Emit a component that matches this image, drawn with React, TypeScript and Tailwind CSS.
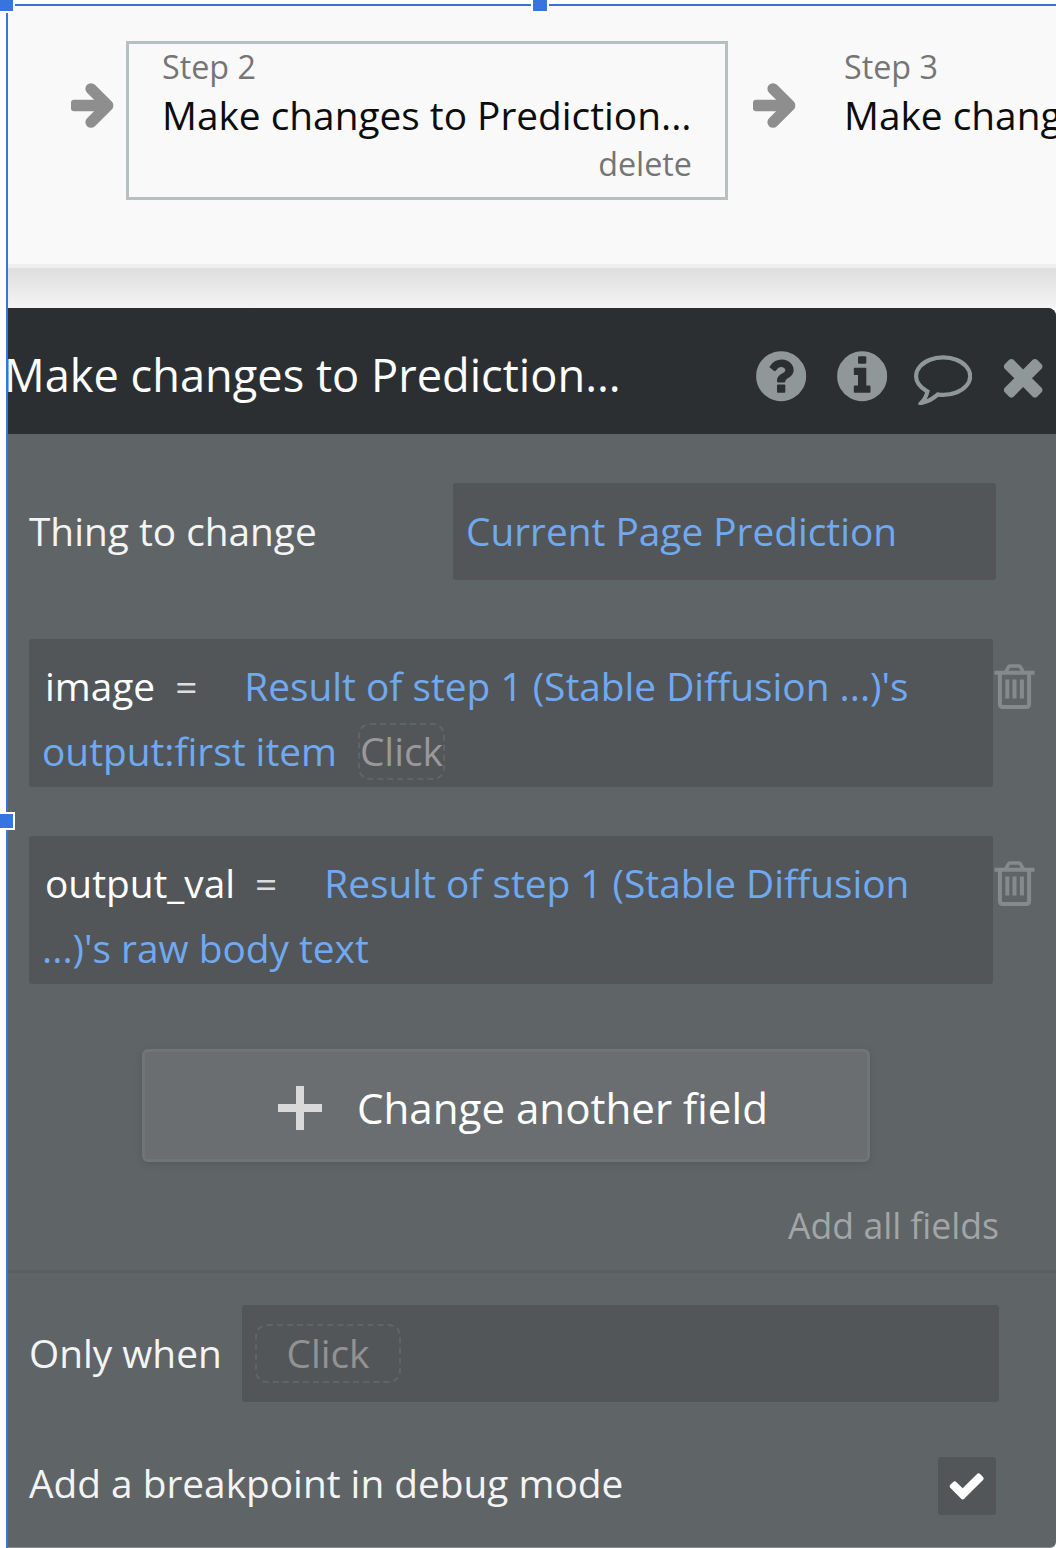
import type { ReactNode } from 'react';

const CIRCLE =
  'm384 0q0 209-103 385.5t-279.5 279.5-385.5 103-385.5-103-279.5-279.5-103-385.5 103-385.5 279.5-279.5 385.5-103 385.5 103 279.5 279.5 103 385.5z';

const glyphs = {
  question:
    'M1024 1376v-192q0-14-9-23t-23-9h-192q-14 0-23 9t-9 23v192q0 14 9 23t23 9h192q14 0 23-9t9-23zm256-672q0-88-55.5-163t-138.5-116-170-41q-243 0-371 213-15 24 8 42l132 100q7 6 19 6 16 0 25-12 53-68 86-92 34-24 86-24 48 0 85.5 26t37.5 59q0 38-20 61t-68 45q-63 28-115.5 86.5t-52.5 125.5v36q0 14 9 23t23 9h192q14 0 23-9t9-23q0-19 21.5-49.5t54.5-49.5q32-18 49-28.5t46-35 44.5-48 28-60.5 12.5-81zM1280 896' +
    CIRCLE,
  info:
    'M1152 1376v-160q0-14-9-23t-23-9h-96v-512q0-14-9-23t-23-9h-320q-14 0-23 9t-9 23v160q0 14 9 23t23 9h96v320h-96q-14 0-23 9t-9 23v160q0 14 9 23t23 9h448q14 0 23-9t9-23zm-128-896v-160q0-14-9-23t-23-9h-192q-14 0-23 9t-9 23v160q0 14 9 23t23 9h192q14 0 23-9t9-23zM1280 896' +
    CIRCLE,
  comment:
    'M896 384q-204 0-381.5 69.5t-282 187.5-104.5 255q0 112 71.5 213.5t201.5 175.5l87 50-27 96q-24 91-70 172 152-63 275-171l43-38 57 6q69 8 130 8 204 0 381.5-69.5t282-187.5 104.5-255-104.5-255-282-187.5-381.5-69.5zm896 512q0 174-120 321.5t-326 233-450 85.5q-70 0-145-8-198 175-460 242-49 14-114 22h-5q-15 0-27-10.5t-16-27.5v-1q-3-4-.5-12t2-10 4.5-9.5l6-9 7-8.5 8-9q7-8 31-34.5t34.5-38 31-39.5 32.5-51 27-59 26-76q-157-89-247.5-220t-90.5-281q0-174 120-321.5t326-233 450-85.5 450 85.5 326 233 120 321.5z',
  times:
    'M1490 1322q0 40-28 68l-136 136q-28 28-68 28t-68-28l-294-294-294 294q-28 28-68 28t-68-28l-136-136q-28-28-28-68t28-68l294-294-294-294q-28-28-28-68t28-68l136-136q28-28 68-28t68 28l294 294 294-294q28-28 68-28t68 28l136 136q28 28 28 68t-28 68l-294 294 294 294q28 28 28 68z',
  check:
    'M1671 566q0 40-28 68l-724 724-136 136q-28 28-68 28t-68-28l-136-136-362-362q-28-28-28-68t28-68l136-136q28-28 68-28t68 28l294 295 656-657q28-28 68-28t68 28l136 136q28 28 28 68z',
};

function Glyph({ name, className }: { name: keyof typeof glyphs; className: string }) {
  return (
    <svg viewBox="0 0 1792 1792" fill="currentColor" fillRule="evenodd" className={className}>
      <path d={glyphs[name]} />
    </svg>
  );
}

function Arrow() {
  return (
    <svg viewBox="0 0 44 46" className="mt-[77px] h-[46px] w-[44px] shrink-0 text-[#8e8e8e]">
      <rect x="1" y="16.800" width="36" height="11.400" rx="3" fill="currentColor" />
      <path
        d="M21 5.800 37.800 22.500 21 39.200"
        fill="none"
        stroke="currentColor"
        strokeWidth="11.200"
        strokeLinecap="round"
        strokeLinejoin="round"
      />
    </svg>
  );
}

function Trash() {
  return (
    <svg viewBox="0 0 42 46" fill="none" stroke="currentColor" className="mt-[25px] h-[46px] w-[42px] shrink-0 text-[#868a8c]">
      <path d="M1.500 8.800h40" strokeWidth="4" />
      <path d="M12.500 8.500l2.800-5.200q.6-1.300 2-1.300h8.400q1.400 0 2 1.300l2.800 5.200" strokeWidth="3.600" />
      <path d="M6.900 9v31q0 3 3 3h23.200q3 0 3-3V9" strokeWidth="4" />
      <path d="M14.300 15.500v19M21.500 15.500v19M28.900 15.500v19" strokeWidth="4" />
    </svg>
  );
}

function Step({ label, title, selected }: { label: string; title: string; selected?: boolean }) {
  return (
    <div
      className={
        selected
          ? 'mt-[35px] h-[159px] w-[602px] shrink-0 border-[3px] border-[#b6c0c1] px-[33px]'
          : 'mt-[35px] h-[159px] w-[602px] shrink-0 border-[3px] border-transparent px-[33px]'
      }
    >
      <div className="h-[44px] text-[32.3px] leading-[44px] text-[#757575]">{label}</div>
      <div className="h-[54px] text-[38.8px] leading-[55px] whitespace-nowrap text-[#0c0c0c]">{title}</div>
      {selected && <div className="h-[42px] text-right text-[32.3px] leading-[42px] text-[#757575]">delete</div>}
    </div>
  );
}

function FieldRow({ children }: { children: ReactNode }) {
  return (
    <div className="mb-[49px] flex pl-[21px]">
      <div className="h-[148px] w-[964px] shrink-0 rounded-[3px] bg-[#525659] pt-[15px] pl-[13px] text-[38.8px] leading-[65px] whitespace-nowrap text-[#70a9f0]">
        {children}
      </div>
      <Trash />
    </div>
  );
}

export default function App() {
  return (
    <div className="relative h-[1548px] w-[1056px] overflow-hidden bg-white pt-1.5 pl-2 font-['Open_Sans','Noto_Sans',sans-serif]">
      <div className="flex h-[258px] bg-[#f9f9f9] pl-[62px]">
        <Arrow />
        <div className="ml-[12px] shrink-0">
          <Step label="Step 2" title="Make changes to Prediction..." selected />
        </div>
        <div className="ml-[24px] shrink-0">
          <Arrow />
        </div>
        <div className="ml-[12px] shrink-0">
          <Step label="Step 3" title="Make changes" />
        </div>
      </div>
      <div className="h-1 bg-[#eeeeee]" />
      <div className="h-10 bg-linear-to-b from-[#dedede] to-[#f4f4f4]" />

      <div className="h-[1240px] rounded-tr-[8px] rounded-br-[6px] border-b border-[#888b8d] bg-[#5f6467] text-[38.8px] text-[#f4f4f4]">
        <div className="flex h-[126px] items-start rounded-tr-[8px] bg-[#2b2f32] text-[#8f9799]">
          <h1 className="-ml-1 mt-[36px] w-[748px] shrink-0 text-[45.2px] leading-[62px] whitespace-nowrap text-white">
            Make changes to Prediction...
          </h1>
          <Glyph name="question" className="mt-[39px] h-[58.3px] w-[58.3px] shrink-0" />
          <Glyph name="info" className="mt-[39px] ml-[22.500px] h-[58.3px] w-[58.3px] shrink-0" />
          <Glyph name="comment" className="mt-[39px] ml-[22.800px] h-[58.3px] w-[58.3px] shrink-0" />
          <Glyph name="times" className="mt-[39px] ml-[22px] h-[58.3px] w-[58.3px] shrink-0" />
        </div>

        <div className="flex items-center pt-[49px] pb-[59px] pl-[21px]">
          <div className="w-[424px] shrink-0">Thing to change</div>
          <div className="h-[97px] w-[543px] rounded-[3px] bg-[#525659] pl-[13px] leading-[97px] text-[#70a9f0]">
            Current Page Prediction
          </div>
        </div>

        <FieldRow>
          <span className="ml-[3px] text-white">image</span>
          <span className="ml-[20px] text-[#dddddd]">=</span>
          <span className="ml-[47px]">Result of step 1 (Stable Diffusion ...)'s</span>
          <br />
          output:first item
          <span className="ml-[21px] inline-block h-[57px] rounded-[12px] border-2 border-dashed border-[#5f6467] leading-[53px] text-[#999999]">
            Click
          </span>
        </FieldRow>
        <FieldRow>
          <span className="ml-[3px] text-white">output_val</span>
          <span className="ml-[20px] text-[#dddddd]">=</span>
          <span className="ml-[47px]">Result of step 1 (Stable Diffusion</span>
          <br />
          ...)'s raw body text
        </FieldRow>

        <button className="mt-[65px] ml-[134px] flex h-[113px] w-[728px] items-center rounded-[6px] border-[3px] border-[#717577] bg-[#6a6e70] pl-[133px] text-[42.1px] text-white shadow-[0_2px_8px_rgba(0,0,0,0.1)]">
          <svg viewBox="0 0 44 44" className="mt-[4px] h-11 w-11 text-[#d9d9d9]">
            <path d="M22 0v44M0 22h44" stroke="currentColor" strokeWidth="8" />
          </svg>
          <span className="mt-[4px] ml-[35px]">Change another field</span>
        </button>

        <div className="mt-[38px] pr-[57px] text-right text-[35.6px] leading-[50px] text-[#a3a5a6]">Add all fields</div>
        <div className="mt-[20px] h-[3px] bg-[#5a5f62]" />

        <div className="flex items-center pt-8 pl-[21px]">
          <div className="w-[213px] shrink-0">Only when</div>
          <div className="flex h-[97px] w-[757px] items-center rounded-[3px] bg-[#525659] pl-[13px]">
            <span className="h-[59px] w-[146px] rounded-[12px] border-2 border-dashed border-[#5f6467] text-center leading-[54px] text-[#929292]">
              Click
            </span>
          </div>
        </div>

        <div className="flex items-center justify-between pt-[55px] pr-[60px] pl-[21px]">
          <span className="-mt-[6px]">Add a breakpoint in debug mode</span>
          <span className="flex h-[58px] w-[58px] items-center justify-center rounded-[3px] bg-[#525659]">
            <Glyph name="check" className="h-[39.3px] w-[39.3px] text-white" />
          </span>
        </div>
      </div>

      {/* selection outline and its drag handles */}
      <div className="pointer-events-none absolute top-1 left-1.5 h-[1544px] w-[1050px] border-t-2 border-l-2 border-[#3874e0]" />
      <div className="absolute -top-1 -left-1 h-[17px] w-[19px] border-2 border-white bg-[#3874e0]" />
      <div className="absolute -top-1 left-[531px] h-[17px] w-[18px] border-2 border-white bg-[#3874e0]" />
      <div className="absolute top-[812px] -left-1 h-[18px] w-[19px] border-2 border-white bg-[#3874e0]" />
    </div>
  );
}
